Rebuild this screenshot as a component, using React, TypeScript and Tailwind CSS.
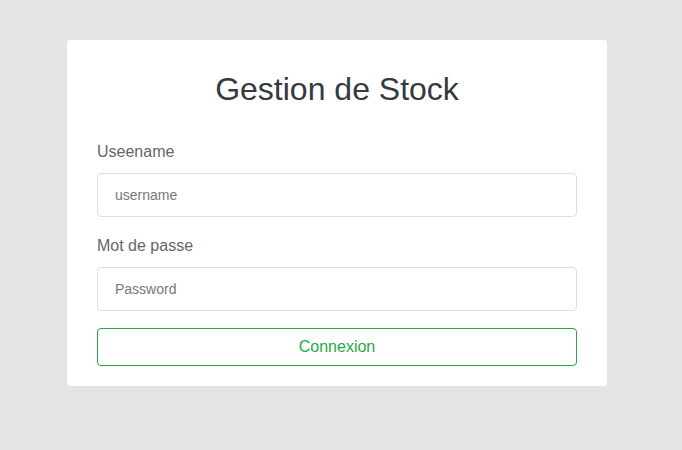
import React from 'react';

export default function App() {
  return (
    <div className="min-h-[450px] w-full bg-[#e4e4e4] pt-[40px] pl-[67px] font-['Liberation_Sans',Arial,sans-serif]">
      <div className="w-[540px] rounded-[3px] bg-white px-[30px] pt-[30px] pb-[20px]">
        <h1 className="text-center text-[32px] leading-[38px] text-[#343a40] mb-[32px]">
          Gestion de Stock
        </h1>

        <form onSubmit={(e) => e.preventDefault()}>
          {/* Username */}
          <div className="mb-[17px]">
            <label className="block text-[16px] leading-[24px] text-[#666666] mb-[9px]">Useename</label>
            <input
              type="text"
              placeholder="username"
              className="block h-[44px] w-full rounded-[4px] border border-[#dedede] px-[17px] text-[14px] text-[#495057] placeholder:text-[#777777] outline-none"
            />
          </div>

          {/* Password */}
          <div className="mb-[17px]">
            <label className="block text-[16px] leading-[24px] text-[#666666] mb-[9px]">Mot de passe</label>
            <input
              type="password"
              placeholder="Password"
              className="block h-[44px] w-full rounded-[4px] border border-[#dedede] px-[17px] text-[14px] text-[#495057] placeholder:text-[#777777] outline-none"
            />
          </div>

          <button
            type="submit"
            className="block h-[38px] w-full rounded-[4px] border border-[#28a745] bg-white text-[16px] text-[#28a745]"
          >
            Connexion
          </button>
        </form>
      </div>
    </div>
  );
}
